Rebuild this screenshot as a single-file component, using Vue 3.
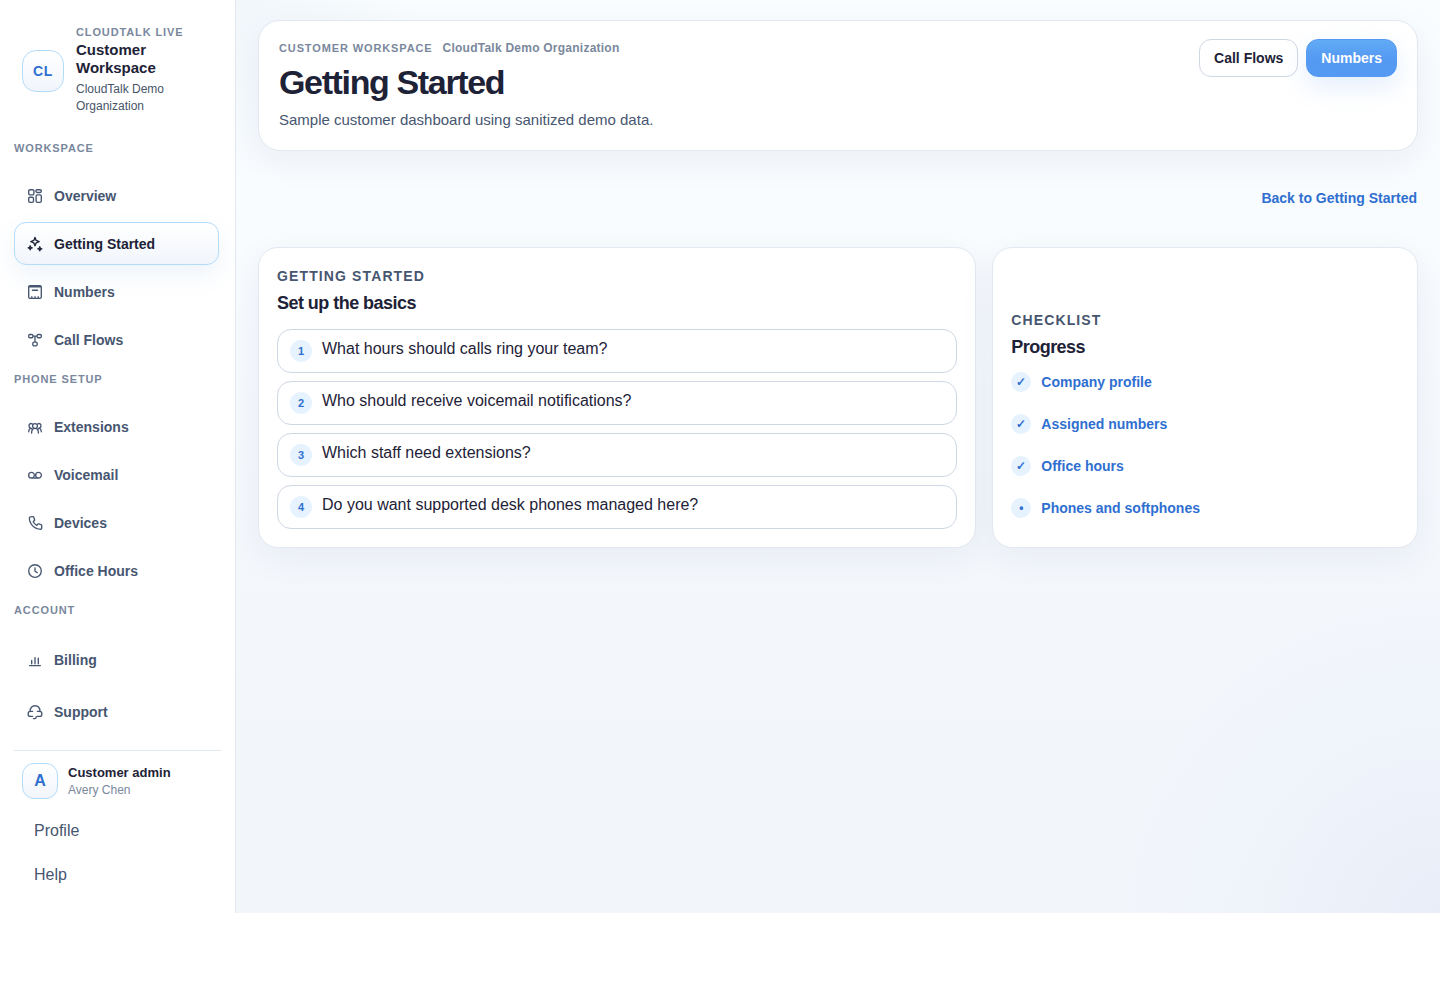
<script setup>
const groups = [
  {
    label: 'Workspace',
    items: [
      { name: 'Overview', icon: 'grid' },
      { name: 'Getting Started', icon: 'sparkles', active: true },
      { name: 'Numbers', icon: 'keypad' },
      { name: 'Call Flows', icon: 'flow' },
    ],
  },
  {
    label: 'Phone setup',
    items: [
      { name: 'Extensions', icon: 'people' },
      { name: 'Voicemail', icon: 'voicemail' },
      { name: 'Devices', icon: 'phone' },
      { name: 'Office Hours', icon: 'clock' },
    ],
  },
  {
    label: 'Account',
    loose: true,
    items: [
      { name: 'Billing', icon: 'bars' },
      { name: 'Support', icon: 'headset' },
    ],
  },
]

const icons = {
  grid: 'M3 1.7h2.6a1.3 1.3 0 0 1 1.3 1.3v2.6a1.3 1.3 0 0 1-1.3 1.3H3a1.3 1.3 0 0 1-1.3-1.3V3A1.3 1.3 0 0 1 3 1.7zM10.2 1.7H13a1.3 1.3 0 0 1 0 2.8h-2.8a1.3 1.3 0 0 1 0-2.8zM3 9.2h2.2a1.3 1.3 0 0 1 1.3 1.3V13a1.3 1.3 0 0 1-1.3 1.3H3A1.3 1.3 0 0 1 1.7 13v-2.5A1.3 1.3 0 0 1 3 9.2zM10.4 6.8H13a1.3 1.3 0 0 1 1.3 1.3V13a1.3 1.3 0 0 1-1.3 1.3h-2.6A1.3 1.3 0 0 1 9.1 13V8.1a1.3 1.3 0 0 1 1.3-1.3z',
  sparkles: 'M8 1.4 9.2 4.4 12.2 5.6 9.2 6.8 8 9.8 6.8 6.8 3.8 5.6 6.8 4.4zM3.2 9.8l.5 1.5 1.5.5-1.5.5-.5 1.5-.5-1.5-1.5-.5 1.5-.5zM12.8 10.8l.5 1.5 1.5.5-1.5.5-.5 1.5-.5-1.5-1.5-.5 1.5-.5z',
  keypad: 'M3 1.7h10A1.3 1.3 0 0 1 14.3 3v10a1.3 1.3 0 0 1-1.3 1.3H3A1.3 1.3 0 0 1 1.7 13V3A1.3 1.3 0 0 1 3 1.7zM2.4 2.8h11.2M5.4 6.2h5.2M4.6 13h.4M7.8 13h.4M11 13h.4',
  flow: 'M2.9 2.5h1.8a1.2 1.2 0 0 1 1.2 1.2v.8a1.2 1.2 0 0 1-1.2 1.2H2.9a1.2 1.2 0 0 1-1.2-1.2v-.8a1.2 1.2 0 0 1 1.2-1.2zM11.3 2.5h1.8a1.2 1.2 0 0 1 1.2 1.2v.8a1.2 1.2 0 0 1-1.2 1.2h-1.8a1.2 1.2 0 0 1-1.2-1.2v-.8a1.2 1.2 0 0 1 1.2-1.2zM7.1 10.1h1.8a1.3 1.3 0 0 1 1.3 1.3v1.2a1.3 1.3 0 0 1-1.3 1.3H7.1a1.3 1.3 0 0 1-1.3-1.3v-1.2a1.3 1.3 0 0 1 1.3-1.3zM5.9 4.1h4.2M8 4.2v5.9',
  people: 'M8 4.6a2.4 2.4 0 1 1 0 4.8 2.4 2.4 0 0 1 0-4.8zM4.6 14c0-2.6 1.2-4.6 3.4-4.6s3.4 2 3.4 4.6M5.2 4.8C3.4 4 2 5 2 6.8c0 1.2.6 2 1.7 2.3C2.4 9.6 1.7 10.8 1.7 12.8M10.8 4.8c1.8-.8 3.2.2 3.2 2 0 1.2-.6 2-1.7 2.3 1.3.5 2 1.7 2 3.7M3.8 9.1l1.6 1.4M12.2 9.1l-1.6 1.4',
  voicemail: 'M4.5 5.3a2.8 2.8 0 1 1 0 5.7 2.8 2.8 0 0 1 0-5.7zM11.5 5.3a2.8 2.8 0 1 1 0 5.7 2.8 2.8 0 0 1 0-5.7zM4.2 11.1h7.6',
  phone: 'M3.4 1.8 6 1.6a.8.8 0 0 1 .8.6l.8 2.6a.8.8 0 0 1-.3.8L6.2 6.7a9 9 0 0 0 3.6 3.6l1.1-1.2a.8.8 0 0 1 .8-.2l2.4.8a.8.8 0 0 1 .6.8v2.7a1 1 0 0 1-1 1A11.2 11.2 0 0 1 2.4 2.8a1 1 0 0 1 1-1z',
  clock: 'M8 1.7a6.3 6.3 0 1 1 0 12.6A6.3 6.3 0 0 1 8 1.7zM8 4.8v3.4l2.2 1.4',
  bars: 'M2.6 13.6h10.8M4.7 8.4v3.4M8 5.6v6.2M11.3 6.2v5.6',
  headset: 'M3 7.6C3 3.8 5.2 1.7 8 1.7s5 2.1 5 5.9M5.6 7.4H3.2c-1.2 0-2 .8-2 2v1c0 1.2.8 2 2 2h2.4M10.4 7.4h2.4c1.2 0 2 .8 2 2v1c0 1.2-.8 2-2 2h-2.4M6.4 14.6h1.4c.8 0 1.4-.5 1.4-1.4v-.6',
}

const questions = [
  'What hours should calls ring your team?',
  'Who should receive voicemail notifications?',
  'Which staff need extensions?',
  'Do you want supported desk phones managed here?',
]

const checklist = [
  { text: 'Company profile', done: true },
  { text: 'Assigned numbers', done: true },
  { text: 'Office hours', done: true },
  { text: 'Phones and softphones', done: false },
]
</script>

<template>
  <div class="shell">
    <aside class="sidebar">
      <div class="brand">
        <span class="mark">CL</span>
        <div class="brand-text">
          <span class="eyebrow">CloudTalk Live</span>
          <strong>Customer Workspace</strong>
          <span class="org">CloudTalk Demo Organization</span>
        </div>
      </div>

      <nav class="nav">
        <section v-for="group in groups" :key="group.label" class="group">
          <h2 class="eyebrow">{{ group.label }}</h2>
          <div class="links" :class="{ loose: group.loose }">
            <a
              v-for="item in group.items"
              :key="item.name"
              href="#"
              class="nav-link"
              :class="{ active: item.active }"
            >
              <svg class="icon" viewBox="0 0 16 16" aria-hidden="true"><path :d="icons[item.icon]" /></svg>
              <span>{{ item.name }}</span>
            </a>
          </div>
        </section>
      </nav>

      <div class="account">
        <div class="user">
          <span class="mark avatar">A</span>
          <div class="user-text">
            <strong>Customer admin</strong>
            <span>Avery Chen</span>
          </div>
        </div>
        <a href="#" class="plain-link">Profile</a>
        <a href="#" class="plain-link">Help</a>
      </div>
    </aside>

    <main class="main">
      <header class="hero">
        <div>
          <div class="crumbs">
            <span class="eyebrow">Customer workspace</span>
            <span class="crumb-org">CloudTalk Demo Organization</span>
          </div>
          <h1>Getting Started</h1>
          <p>Sample customer dashboard using sanitized demo data.</p>
        </div>
        <div class="actions">
          <button type="button" class="button">Call Flows</button>
          <button type="button" class="button primary">Numbers</button>
        </div>
      </header>

      <div class="back"><a href="#">Back to Getting Started</a></div>

      <div class="cards">
        <section class="card">
          <p class="kicker">Getting started</p>
          <h2>Set up the basics</h2>
          <ol class="steps">
            <li v-for="(question, i) in questions" :key="question">
              <span class="step-no">{{ i + 1 }}</span>
              <span>{{ question }}</span>
            </li>
          </ol>
        </section>

        <section class="card progress">
          <p class="kicker">Checklist</p>
          <h2>Progress</h2>
          <ul class="checks">
            <li v-for="item in checklist" :key="item.text">
              <a href="#"><span class="tick">{{ item.done ? '✓' : '•' }}</span>{{ item.text }}</a>
            </li>
          </ul>
        </section>
      </div>
    </main>
  </div>
</template>

<style>
body {
  background: #fff;
}
</style>

<style scoped>
.shell,
.shell * {
  box-sizing: border-box;
}

.shell {
  display: grid;
  grid-template-columns: 236px 1fr;
  font-family: "Liberation Sans", Arial, sans-serif;
  font-size: 16px;
  color: #1e2237;
  background:
    radial-gradient(circle at 100% 100%, rgba(99, 102, 200, 0.06), rgba(99, 102, 200, 0) 320px),
    radial-gradient(circle at 236px 0, rgba(148, 163, 204, 0.07), rgba(148, 163, 204, 0) 180px),
    linear-gradient(180deg, #f9fdff 0, #f8fcff 240px, #f3f7fc 640px, #f2f6fb 100%);
}

h1, h2, p, ol, ul {
  margin: 0;
  padding: 0;
}

ol, ul {
  list-style: none;
}

a {
  color: inherit;
  text-decoration: none;
}

.eyebrow {
  font-size: 11px;
  line-height: 16px;
  font-weight: 700;
  letter-spacing: 0.08em;
  text-transform: uppercase;
  color: #7a889d;
}

.sidebar {
  display: flex;
  flex-direction: column;
  padding: 24px 14px 16px;
  background: #fff;
  border-right: 1px solid #e2e8f0;
}

.brand {
  display: flex;
  align-items: center;
  gap: 12px;
  padding: 0 8px;
}

.mark {
  display: grid;
  place-items: center;
  flex: none;
  width: 42px;
  height: 42px;
  border: 1px solid #b3dcfb;
  border-radius: 14px;
  background: linear-gradient(180deg, #fff, #f1f5fb);
  color: #2f6fd0;
  font-size: 14px;
  font-weight: 700;
  letter-spacing: 0.04em;
}

.brand-text {
  display: flex;
  flex-direction: column;
  padding-bottom: 2px;
}

.brand-text strong {
  margin-top: 1px;
  font-size: 15px;
  line-height: 18px;
}

.org {
  margin-top: 4px;
  font-size: 12px;
  line-height: 17px;
  color: #475569;
}

.nav {
  display: flex;
  flex-direction: column;
  gap: 10px;
  margin-top: 23px;
  padding: 0 2px 17px 0;
}

.links {
  display: flex;
  flex-direction: column;
  gap: 5px;
  margin-top: 18px;
}

.links.loose {
  gap: 9px;
  margin-top: 20px;
}

.nav-link {
  display: flex;
  align-items: center;
  gap: 11px;
  height: 43px;
  padding: 0 12px;
  border: 1px solid transparent;
  border-radius: 12px;
  font-size: 14px;
  font-weight: 700;
  color: #475670;
}

.nav-link.active {
  border-color: #b3dcfb;
  background: linear-gradient(180deg, #fff, #f1f5fb);
  box-shadow: 0 10px 24px rgba(71, 130, 200, 0.09);
  color: #1e2237;
}

.icon {
  flex: none;
  width: 16px;
  height: 16px;
  fill: none;
  stroke: currentColor;
  stroke-width: 1.35;
  stroke-linecap: round;
  stroke-linejoin: round;
}

.account {
  display: flex;
  flex-direction: column;
  padding-top: 12px;
  border-top: 1px solid #e2e8f0;
}

.user {
  display: flex;
  align-items: center;
  gap: 10px;
  padding: 0 8px;
  margin-bottom: 10px;
}

.avatar {
  width: 36px;
  height: 36px;
  border-radius: 12px;
  font-size: 16px;
  letter-spacing: normal;
}

.user-text {
  display: flex;
  flex-direction: column;
  gap: 1px;
  font-size: 12px;
  line-height: 17px;
  color: #7a889d;
}

.user-text strong {
  font-size: 13px;
  color: #1e2237;
}

.plain-link {
  display: flex;
  align-items: center;
  height: 44px;
  padding: 0 20px;
  color: #475670;
}

.main {
  min-width: 0;
  padding: 20px 22px;
}

.hero {
  display: flex;
  justify-content: space-between;
  align-items: flex-start;
  padding: 18px 20px;
  border: 1px solid #e2e8f0;
  border-radius: 22px;
  background: #fff;
  box-shadow: 0 10px 36px rgba(30, 41, 90, 0.06);
}

.crumbs {
  display: flex;
  align-items: center;
  gap: 10px;
  height: 18px;
}

.crumb-org {
  font-size: 12px;
  font-weight: 700;
  letter-spacing: 0.02em;
  color: #7a889d;
}

h1 {
  margin: 6px 0;
  font-size: 34px;
  line-height: 39px;
  letter-spacing: -0.04em;
}

.hero p {
  font-size: 15px;
  line-height: 24px;
  color: #475670;
}

.actions {
  display: flex;
  gap: 8px;
}

.button {
  height: 38px;
  padding: 0 14px;
  border: 1px solid #cfd7e4;
  border-radius: 12px;
  background: #fff;
  font: 700 14px "Liberation Sans", Arial, sans-serif;
  color: #1e2237;
}

.primary {
  border-color: #559bf3;
  background: linear-gradient(180deg, #62abf5, #549af3 50%);
  box-shadow: 0 10px 24px rgba(84, 154, 243, 0.16);
  color: #fff;
}

.back {
  display: flex;
  justify-content: flex-end;
  padding: 38px 1px 40px;
  font-size: 14px;
  line-height: 18px;
  font-weight: 700;
  color: #2f6fd0;
}

.cards {
  display: grid;
  grid-template-columns: 27fr 16fr;
  gap: 16px;
}

.card {
  padding: 18px;
  border: 1px solid #e2e8f0;
  border-radius: 20px;
  background: #fff;
  box-shadow: 0 10px 36px rgba(30, 41, 90, 0.06);
}

.progress {
  display: flex;
  flex-direction: column;
  justify-content: flex-end;
}

.kicker {
  font-size: 14px;
  line-height: 20px;
  font-weight: 700;
  letter-spacing: 0.08em;
  text-transform: uppercase;
  color: #475670;
}

.card h2 {
  margin-top: 6px;
  font-size: 18px;
  line-height: 22px;
  letter-spacing: -0.03em;
}

.steps {
  display: grid;
  gap: 8px;
  margin-top: 15px;
}

.steps li {
  display: flex;
  align-items: flex-start;
  gap: 10px;
  padding: 10px 12px;
  border: 1px solid #cfd7e4;
  border-radius: 14px;
  line-height: 18px;
}

.step-no,
.tick {
  display: grid;
  place-items: center;
  flex: none;
  width: 22px;
  height: 22px;
  border-radius: 50%;
  background: #e6f3ff;
  color: #2f6fd0;
  font-size: 11px;
  font-weight: 700;
}

.tick {
  width: 20px;
  height: 20px;
  font-size: 12px;
}

.checks {
  margin-top: 3px;
}

.checks a {
  display: flex;
  align-items: center;
  gap: 10px;
  height: 42px;
  font-size: 14px;
  font-weight: 700;
  color: #2f6fd0;
}
</style>
